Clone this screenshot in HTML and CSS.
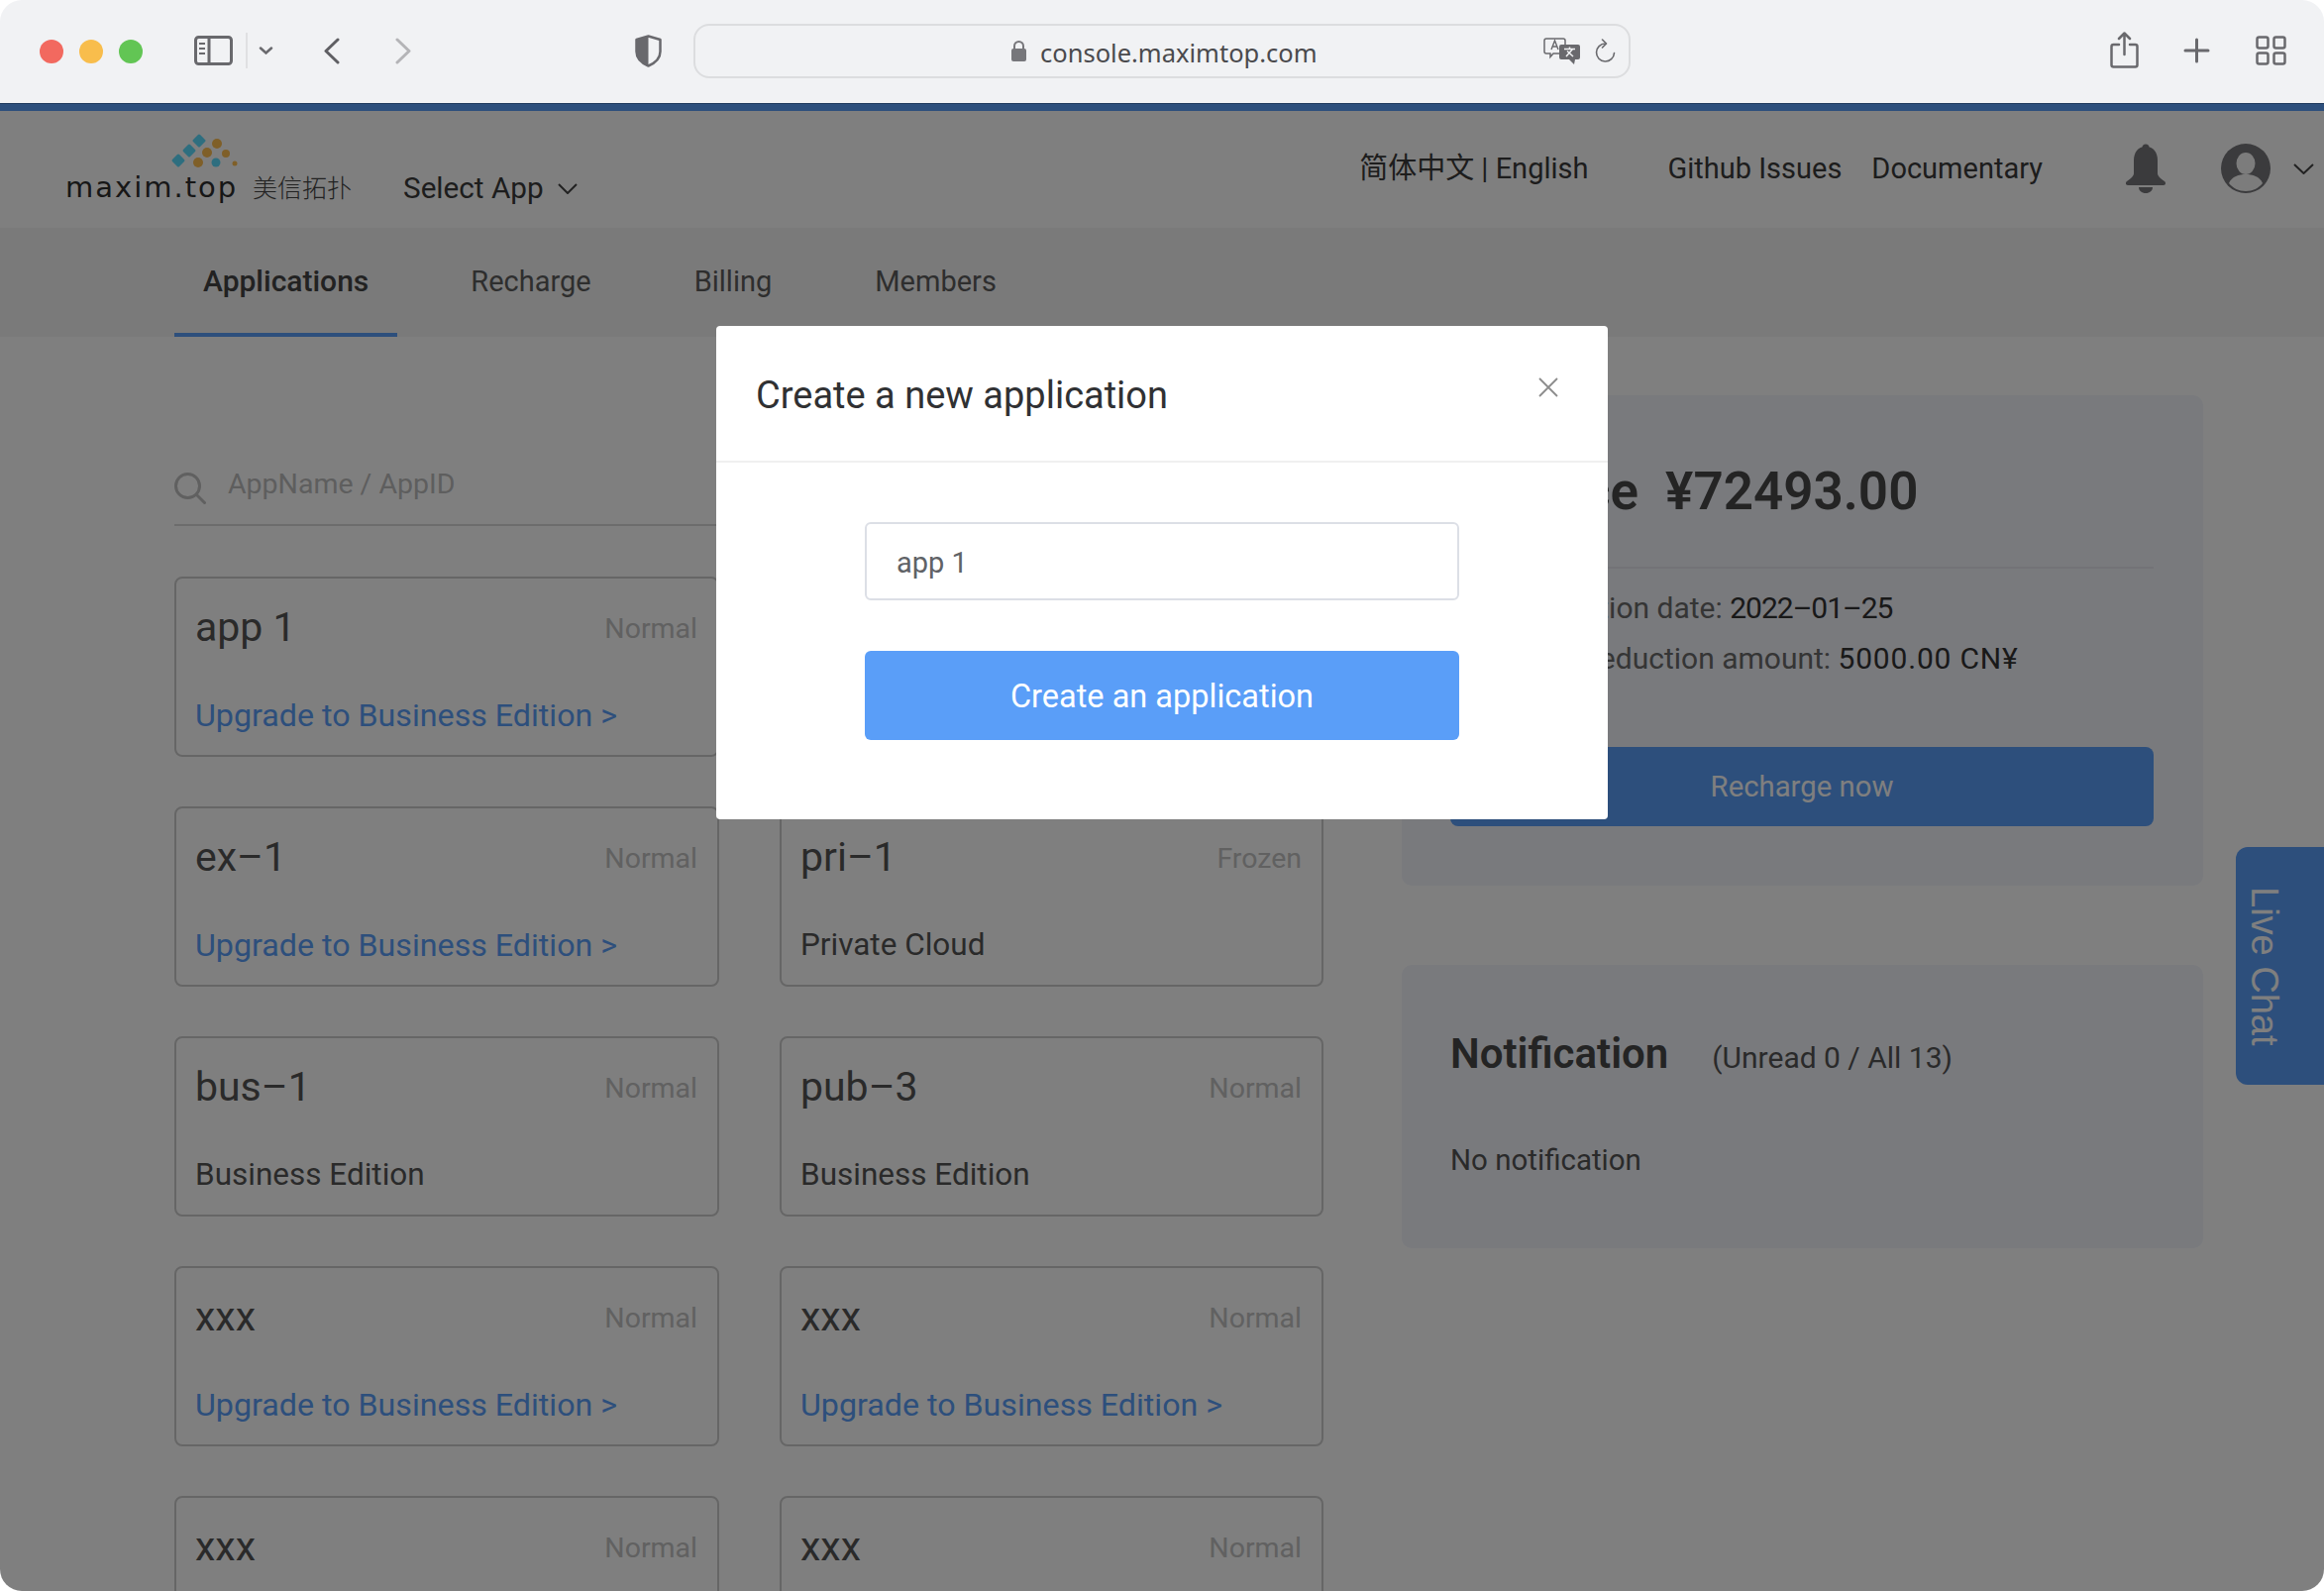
FILE: index.html
```html
<!DOCTYPE html>
<html lang="en">

<head>
    <meta charset="UTF-8">
    <title>console.maximtop.com</title>
    <link rel="stylesheet" href="styles.css">
</head>

<body>
    <div class="window">
        <div class="toolbar">
            <span class="light red"></span>
            <span class="light yellow"></span>
            <span class="light green"></span>

            <svg class="ico-sidebar" width="39" height="30" viewBox="0 0 39 30" fill="none" stroke="#69696d" stroke-width="3">
                <rect x="1.5" y="1.5" width="36" height="27" rx="3" />
                <path d="M15 2v26" />
                <path d="M5 8h6M5 13h6M5 18h6" stroke-width="2" />
            </svg>
            <span class="tb-divider"></span>
            <svg class="ico-caret" width="15" height="8" viewBox="0 0 15 8" fill="none" stroke="#69696d" stroke-width="2.5" stroke-linecap="round">
                <path d="M2 1.5l5.5 5 5.5-5" />
            </svg>
            <svg class="ico-back" width="17" height="27" viewBox="0 0 17 27" fill="none" stroke="#5f5f63" stroke-width="3" stroke-linecap="round" stroke-linejoin="round">
                <path d="M15 2L3 13.5 15 25" />
            </svg>
            <svg class="ico-forward" width="17" height="27" viewBox="0 0 17 27" fill="none" stroke="#b4b4b7" stroke-width="3" stroke-linecap="round" stroke-linejoin="round">
                <path d="M2 2l12 11.5L2 25" />
            </svg>
            <svg class="ico-shield" width="27" height="33" viewBox="0 0 27 33">
                <path d="M13.5 1.5L25.5 5v12c0 7-5 11.500-12 14.500C6.500 28.500 1.500 24 1.500 17V5z" fill="none" stroke="#69696d" stroke-width="2.500" stroke-linejoin="round" />
                <path d="M13.500 1.500L1.500 5v12c0 7 5 11.500 12 14.500z" fill="#69696d" />
            </svg>

            <div class="urlbar">
                <svg class="ico-lock" width="17" height="23" viewBox="0 0 17 23">
                    <path d="M4 10V6.500a4.500 4.500 0 0 1 9 0V10" fill="none" stroke="#77777b" stroke-width="2" />
                    <rect x="1" y="9" width="15" height="13" rx="2" fill="#77777b" />
                </svg>
                <span class="url-text">console.maximtop.com</span>
                <svg class="ico-translate" width="37" height="27" viewBox="0 0 37 27">
                    <path d="M3 1h17a2 2 0 0 1 2 2v11a2 2 0 0 1-2 2H10l-3 3.500V16H3a2 2 0 0 1-2-2V3a2 2 0 0 1 2-2z" fill="#f1f2f4" stroke="#69696d" stroke-width="1.500" />
                    <path d="M8 12l3.500-9L15 12M9.300 9h4.500" fill="none" stroke="#69696d" stroke-width="1.400" />
                    <path d="M18 7h17a2 2 0 0 1 2 2v11a2 2 0 0 1-2 2h-3l-1 5-5-5h-8a2 2 0 0 1-2-2V9a2 2 0 0 1 2-2z" fill="#69696d" />
                    <path d="M21 11.500h11M26.500 9.500v2M23 19l6.500-7.500M24 13.500l6 5.500" fill="none" stroke="#f1f2f4" stroke-width="1.500" />
                </svg>
                <svg class="ico-reload" width="21" height="25" viewBox="0 0 21 25" fill="none" stroke="#69696d" stroke-width="1.600" stroke-linecap="round" stroke-linejoin="round">
                    <path d="M10.500 5a9 9 0 1 0 9 9.500" />
                    <path d="M7.500 1l4 4-4 4" />
                </svg>
            </div>

            <svg class="ico-share" width="29" height="37" viewBox="0 0 29 37" fill="none" stroke="#69696d" stroke-width="2.500" stroke-linecap="round" stroke-linejoin="round">
                <path d="M9 13H3.500a2 2 0 0 0-2 2v18.500a2 2 0 0 0 2 2h22a2 2 0 0 0 2-2V15a2 2 0 0 0-2-2H20" />
                <path d="M14.500 23V2M9 7l5.500-5.500L20 7" />
            </svg>
            <svg class="ico-plus" width="27" height="26" viewBox="0 0 27 26" stroke="#69696d" stroke-width="3" stroke-linecap="round">
                <path d="M13.500 2v22M2 13h23" />
            </svg>
            <svg class="ico-tabs" width="31" height="30" viewBox="0 0 31 30" fill="none" stroke="#69696d" stroke-width="2.500">
                <rect x="1.500" y="1.500" width="11" height="11" rx="2" />
                <rect x="18.500" y="1.500" width="11" height="11" rx="2" />
                <rect x="1.500" y="17.500" width="11" height="11" rx="2" />
                <rect x="18.500" y="17.500" width="11" height="11" rx="2" />
            </svg>
        </div>

        <div class="page">
            <div class="strip"></div>
            <div class="topbar">
                <div class="logo">
                    <svg class="logo-mark" width="75" height="37" viewBox="0 0 75 37">
                        <g fill="#5cdcff">
                            <rect x="5" y="22" width="10" height="10" rx="1.500" transform="rotate(45 10 27)" />
                            <rect x="16" y="12" width="10" height="10" rx="1.500" transform="rotate(45 21 17)" />
                            <rect x="26" y="2" width="10" height="10" rx="1.500" transform="rotate(45 31 7)" />
                            <circle cx="48" cy="29" r="4.500" />
                        </g>
                        <g fill="#ffbe50">
                            <circle cx="49" cy="10" r="5" />
                            <circle cx="39" cy="19" r="5" />
                            <circle cx="58" cy="20" r="4" />
                            <circle cx="30" cy="29" r="5" />
                            <circle cx="67" cy="30" r="2.500" />
                        </g>
                    </svg>
                    <div class="logo-text">
                        <span class="logo-en">maxim.top</span>
                        <span class="logo-cn">美信拓扑</span>
                    </div>
                </div>
                <div class="select-app">
                    <span>Select App</span>
                    <svg width="20" height="11" viewBox="0 0 20 11" fill="none" stroke="#444" stroke-width="2">
                        <path d="M1 1l9 9 9-9" />
                    </svg>
                </div>
                <div class="top-links">
                    <span>简体中文 | English</span>
                    <span class="link-github">Github Issues</span>
                    <span class="link-docs">Documentary</span>
                </div>
                <svg class="ico-bell" width="42" height="50" viewBox="0 0 42 50" fill="#76767a">
                    <circle cx="21" cy="4" r="3.500" />
                    <path d="M21 3c8 0 12 6 12 14v13c0 3 3 5 7 8 1.500 1 1.500 4-1 4H3c-2.500 0-2.500-3-1-4 4-3 7-5 7-8V17C9 9 13 3 21 3z" />
                    <path d="M14 44h14c0 3.500-3 6-7 6s-7-2.500-7-6z" />
                </svg>
                <svg class="ico-avatar" width="50" height="50" viewBox="0 0 50 50">
                    <circle cx="25" cy="25" r="25" fill="#76767a" />
                    <ellipse cx="25" cy="20" rx="9.500" ry="11" fill="#fff" opacity=".95" />
                    <path d="M8 40c3-7 10-9 17-9s14 2 17 9c-4 5-10 8-17 8S12 45 8 40z" fill="#fff" opacity=".95" />
                </svg>
                <svg class="ico-user-caret" width="21" height="11" viewBox="0 0 21 11" fill="none" stroke="#444" stroke-width="2">
                    <path d="M1 1l9.500 9L20 1" />
                </svg>
            </div>

            <div class="tabs">
                <span class="tab active">Applications</span>
                <span class="tab">Recharge</span>
                <span class="tab">Billing</span>
                <span class="tab">Members</span>
            </div>

            <div class="content">
                <div class="apps">
                    <div class="search">
                        <svg width="32" height="32" viewBox="0 0 32 32" fill="none" stroke="#c0c0c0" stroke-width="3" stroke-linecap="round">
                            <circle cx="13.500" cy="13.500" r="12" />
                            <path d="M22.500 22.500L30.500 30.500" />
                        </svg>
                        <span>AppName / AppID</span>
                    </div>
                    <div class="app-grid">
                        <div class="card">
                            <div class="card-top"><span class="card-name">app 1</span><span class="card-state">Normal</span></div>
                            <a class="card-upgrade">Upgrade to Business Edition &gt;</a>
                        </div>
                        <div class="card"></div>
                        <div class="card">
                            <div class="card-top"><span class="card-name">ex–1</span><span class="card-state">Normal</span></div>
                            <a class="card-upgrade">Upgrade to Business Edition &gt;</a>
                        </div>
                        <div class="card">
                            <div class="card-top"><span class="card-name">pri–1</span><span class="card-state">Frozen</span></div>
                            <span class="card-edition">Private Cloud</span>
                        </div>
                        <div class="card">
                            <div class="card-top"><span class="card-name">bus–1</span><span class="card-state">Normal</span></div>
                            <span class="card-edition">Business Edition</span>
                        </div>
                        <div class="card">
                            <div class="card-top"><span class="card-name">pub–3</span><span class="card-state">Normal</span></div>
                            <span class="card-edition">Business Edition</span>
                        </div>
                        <div class="card">
                            <div class="card-top"><span class="card-name">xxx</span><span class="card-state">Normal</span></div>
                            <a class="card-upgrade">Upgrade to Business Edition &gt;</a>
                        </div>
                        <div class="card">
                            <div class="card-top"><span class="card-name">xxx</span><span class="card-state">Normal</span></div>
                            <a class="card-upgrade">Upgrade to Business Edition &gt;</a>
                        </div>
                        <div class="card">
                            <div class="card-top"><span class="card-name">xxx</span><span class="card-state">Normal</span></div>
                        </div>
                        <div class="card">
                            <div class="card-top"><span class="card-name">xxx</span><span class="card-state">Normal</span></div>
                        </div>
                    </div>
                </div>

                <div class="side">
                    <div class="panel balance">
                        <div class="balance-title">
                            <span>Balance</span>
                            <span class="balance-amount">¥72493.00</span>
                        </div>
                        <p class="balance-row">Next expiration date: <b class="row-date">2022–01–25</b></p>
                        <p class="balance-row">Minimum deduction amount: <b class="row-amount">5000.00 CN¥</b></p>
                        <div class="btn-recharge">Recharge now</div>
                    </div>
                    <div class="panel notice">
                        <div class="notice-title">
                            <span class="notice-name">Notification</span>
                            <span class="notice-count">(Unread 0 / All 13)</span>
                        </div>
                        <p class="notice-empty">No notification</p>
                    </div>
                </div>
            </div>

            <div class="live-chat">Live Chat</div>
            <div class="scrim"></div>

            <div class="modal">
                <div class="modal-head">
                    <span>Create a new application</span>
                    <svg class="modal-close" width="20" height="20" viewBox="0 0 20 20" stroke="#8c8c8c" stroke-width="1.800">
                        <path d="M1 1l18 18M19 1L1 19" />
                    </svg>
                </div>
                <div class="modal-body">
                    <div class="name-input">app 1</div>
                    <div class="btn-create">Create an application</div>
                </div>
            </div>
        </div>
    </div>
</body>

</html>
```

FILE: styles.css
```css
* {
    box-sizing: border-box;
}

body {
    margin: 0;
    background: #fff;
    font-family: Roboto, "Noto Sans CJK SC", sans-serif;
    color: #4a4a4a;
}

.window {
    position: relative;
    height: 1606px;
    border-radius: 22px;
    overflow: hidden;
}

/* browser toolbar */
.toolbar {
    display: flex;
    align-items: center;
    height: 104px;
    padding: 0 0 2px 40px;
    background: #f1f2f4;
}

.light {
    width: 24px;
    height: 24px;
    margin: 2px 16px 0 0;
    border-radius: 50%;
}

.red {
    background: #f2695f;
}

.yellow {
    background: #f8bd4c;
}

.green {
    background: #62c554;
    margin-right: 0;
}

.ico-sidebar {
    margin-left: 52px;
}

.tb-divider {
    width: 2px;
    height: 36px;
    margin-left: 13px;
    background: #e0e0e2;
}

.ico-caret {
    margin-left: 11px;
}

.ico-back {
    margin-left: 50px;
}

.ico-forward {
    margin-left: 56px;
}

.ico-shield {
    margin-left: 225px;
}

.urlbar {
    display: flex;
    align-items: center;
    width: 946px;
    height: 55px;
    margin-left: 32px;
    padding: 0 13px 0 318px;
    border: 2px solid #dcdddf;
    border-radius: 16px;
}

.url-text {
    margin: 3px 0 0 13px;
    font-size: 25.500px;
    font-family: "Noto Sans", sans-serif;
    color: #4a4a4d;
}

.ico-translate {
    margin-left: auto;
}

.ico-reload {
    margin-left: 15px;
}

.ico-share {
    margin: 0 0 2px 484px;
}

.ico-plus {
    margin-left: 45px;
}

.ico-tabs {
    margin-left: 46px;
}

/* page under the dialog */
.page {
    position: relative;
    height: 1502px;
    overflow: hidden;
    background: #fff;
}

.strip {
    height: 8px;
    border-top: 1px solid #3f74bd;
    background: #5a9ef8;
}

.topbar {
    display: flex;
    align-items: flex-start;
    height: 118px;
    padding-right: 10px;
}

.logo {
    position: relative;
    width: 407px;
    height: 118px;
    flex: none;
}

.logo-mark {
    position: absolute;
    left: 170px;
    top: 23px;
}

.logo-text {
    position: absolute;
    left: 66px;
    top: 58px;
    display: flex;
    align-items: baseline;
    white-space: nowrap;
}

.logo-en {
    width: 189px;
    font-size: 29px;
    font-family: "DejaVu Sans", sans-serif;
    letter-spacing: 2px;
    color: #2e2e2e;
}

.logo-cn {
    font-size: 25px;
    font-family: "Noto Sans CJK SC", sans-serif;
    font-weight: 300;
    color: #444;
}

.select-app {
    display: flex;
    align-items: center;
    gap: 14px;
    margin-top: 57px;
    font-size: 29.700px;
    line-height: 42px;
    color: #3a3a3a;
}

.top-links {
    display: flex;
    margin: 37px 0 0 auto;
    font-size: 29px;
    line-height: 42px;
    color: #3a3a3a;
}

.link-github {
    margin-left: 80px;
}

.link-docs {
    margin-left: 30px;
}

.ico-bell {
    margin: 33px 0 0 83px;
}

.ico-avatar {
    margin: 33px 0 0 55px;
}

.ico-user-caret {
    margin: 53px 0 0 23px;
}

.tabs {
    display: flex;
    gap: 44px;
    height: 110px;
    padding-left: 176px;
    background: #f5f5f5;
}

.tab {
    padding: 0 30px;
    height: 110px;
    line-height: 108px;
    font-size: 29px;
    color: #5c5c5c;
}

.tab.active {
    padding: 0 29px;
    font-size: 30px;
    font-weight: 500;
    color: #444;
    border-bottom: 4px solid #5a9ef8;
}

.content {
    display: flex;
    gap: 79px;
    padding: 59px 0 0 176px;
}

.apps {
    width: 1160px;
    flex: none;
}

.search {
    display: flex;
    align-items: center;
    gap: 22px;
    height: 132px;
    padding-top: 48px;
    border-bottom: 2px solid #d8d8d8;
    font-size: 28.500px;
    color: #bdbdbd;
}

.search svg {
    margin-top: 10px;
}

.app-grid {
    display: grid;
    grid-template-columns: 550px 549px;
    gap: 50px 61px;
    margin-top: 51px;
}

.card {
    height: 182px;
    padding: 0 20px 0 19px;
    border: 2px solid #cdcdcd;
    border-radius: 8px;
}

.card-top {
    display: flex;
    justify-content: space-between;
    align-items: center;
    height: 66px;
    margin: 16px 0 34px;
}

.card-name {
    font-size: 41px;
    color: #555;
}

.card-state {
    margin-top: 2px;
    font-size: 28.500px;
    color: #c2c2c2;
}

.card-upgrade,
.card-edition {
    display: block;
    line-height: 44px;
}

.card-upgrade {
    font-size: 32.200px;
    color: #5a9ef8;
}

.card-edition {
    font-size: 31.500px;
    color: #555;
}

.side {
    width: 809px;
    flex: none;
}

.panel {
    padding: 0 50px 0 49px;
    background: #f2f4fb;
    border-radius: 10px;
}

.balance {
    height: 495px;
    padding-top: 62px;
    margin-bottom: 80px;
}

.balance-title {
    display: flex;
    gap: 27px;
    height: 113px;
    padding-bottom: 43px;
    margin-bottom: 14px;
    border-bottom: 2px solid #e6e7ee;
    font-size: 53px;
    line-height: 70px;
    font-weight: 600;
    color: #484848;
}

.balance-row {
    margin: 0;
    height: 51px;
    font-size: 30px;
    line-height: 51px;
    color: #6a6a6a;
}

.balance-row b {
    font-weight: 400;
    color: #333;
}

.row-date {
    letter-spacing: -1px;
}

.row-amount {
    letter-spacing: .8px;
}

.btn-recharge {
    height: 80px;
    margin-top: 64px;
    background: #5a9ef8;
    border-radius: 8px;
    text-align: center;
    line-height: 80px;
    font-size: 29.300px;
    color: #fff;
}

.notice {
    height: 286px;
    padding-top: 65px;
}

.notice-title {
    display: flex;
    align-items: baseline;
    gap: 44px;
}

.notice-name {
    font-size: 42px;
    font-weight: 600;
    color: #484848;
}

.notice-count {
    font-size: 30px;
    color: #555;
}

.notice-empty {
    margin: 66px 0 0;
    font-size: 29.500px;
    color: #555;
}

.live-chat {
    position: absolute;
    right: 0;
    top: 751px;
    display: flex;
    align-items: center;
    justify-content: center;
    width: 89px;
    height: 240px;
    padding-right: 32px;
    background: #5a9ef8;
    border-radius: 12px 0 0 12px;
    writing-mode: vertical-rl;
    font-family: "Liberation Sans", sans-serif;
    font-size: 38px;
    color: #fff;
}

.scrim {
    position: absolute;
    inset: 0;
    background: rgba(0, 0, 0, .5);
}

.modal {
    position: absolute;
    left: 723px;
    top: 225px;
    width: 900px;
    height: 498px;
    background: #fff;
    border-radius: 4px;
}

.modal-head {
    position: relative;
    height: 138px;
    padding: 40px 40px 0;
    border-bottom: 2px solid #f0f0f0;
    font-size: 38px;
    line-height: 60px;
    color: #303133;
}

.modal-close {
    position: absolute;
    right: 50px;
    top: 52px;
}

.modal-body {
    padding: 60px 150px 0;
}

.name-input {
    height: 79px;
    padding-left: 30px;
    border: 2px solid #dcdfe6;
    border-radius: 6px;
    line-height: 78px;
    font-size: 29px;
    color: #606266;
}

.btn-create {
    height: 90px;
    margin-top: 51px;
    background: #5a9ef8;
    border-radius: 6px;
    text-align: center;
    line-height: 92px;
    font-size: 32.500px;
    color: #fff;
}
```
